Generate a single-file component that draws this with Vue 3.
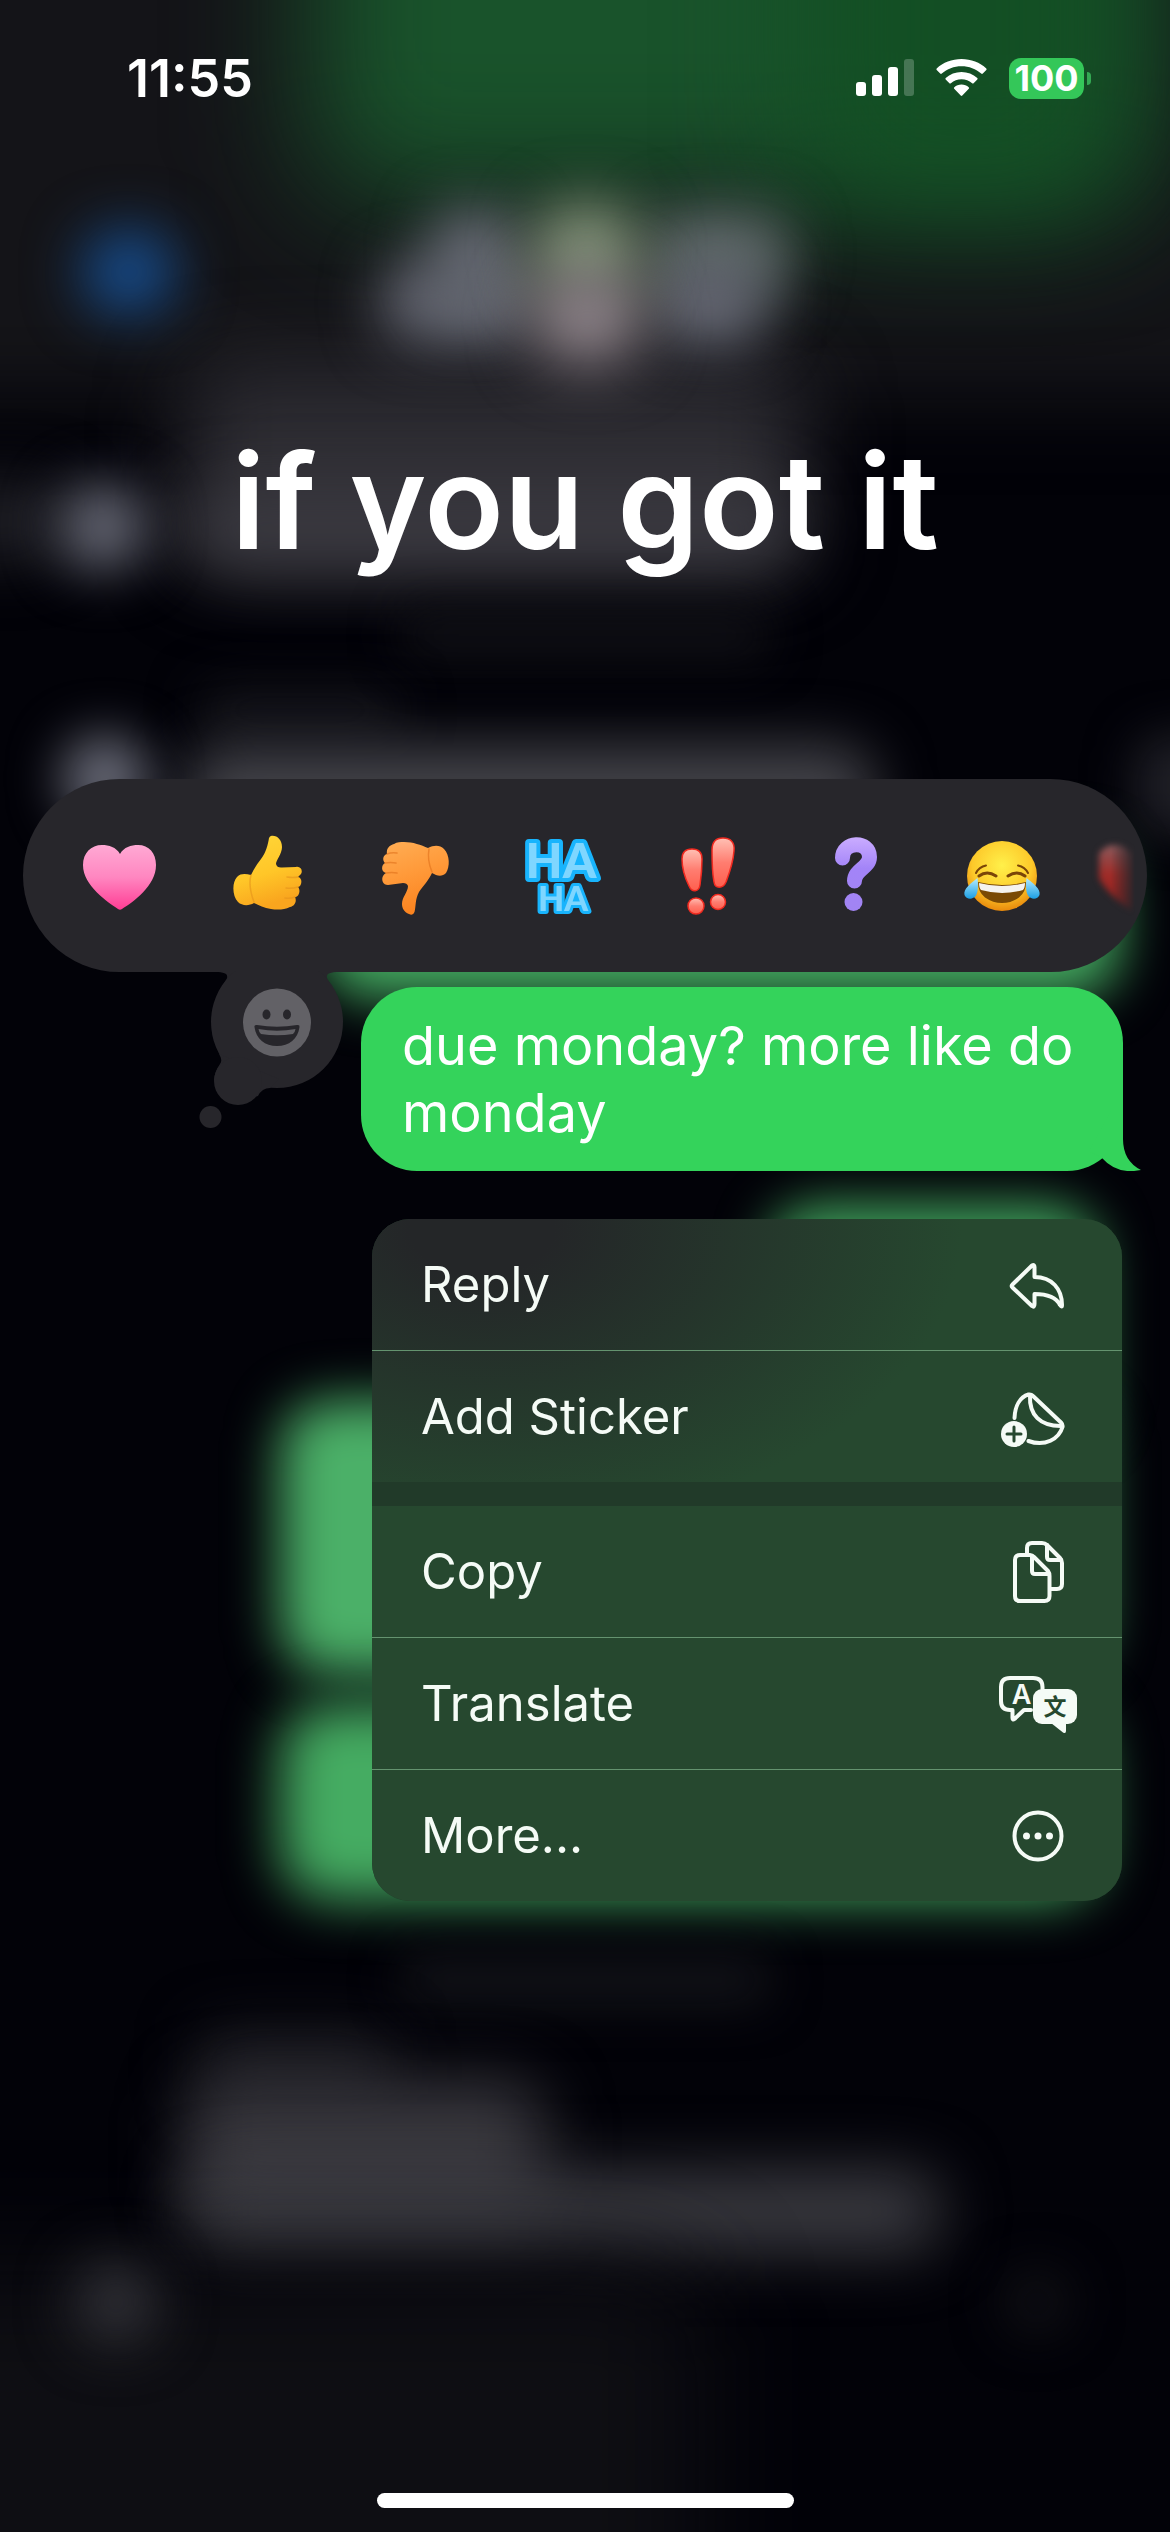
<script setup>
const reactions = ['heart', 'thumbs-up', 'thumbs-down', 'haha', 'exclaim', 'question', 'joy', 'red-heart']

const menuGroups = [
  [
    { label: 'Reply', icon: 'reply' },
    { label: 'Add Sticker', icon: 'sticker' }
  ],
  [
    { label: 'Copy', icon: 'copy' },
    { label: 'Translate', icon: 'translate' },
    { label: 'More...', icon: 'more' }
  ]
]

// Blurred conversation behind the overlay
const blobs = [
  { x: -200, y: -200, w: 1600, h: 600, r: 0, fill: '#141418', blur: 40 },
  { x: 310, y: -350, w: 830, h: 545, r: 60, fill: '#19532b', blur: 64 },
  { x: 800, y: -350, w: 330, h: 560, r: 60, fill: '#134f24', blur: 64 },
  { x: 185, y: 365, w: 620, h: 205, r: 50, fill: '#2e2d33', blur: 42 },
  { x: 185, y: 490, w: 610, h: 76, r: 36, fill: '#3c3b42', blur: 32 },
  { x: -60, y: 480, w: 120, h: 80, r: 20, fill: '#1f1f25', blur: 30 },
  { x: 60, y: 484, w: 86, h: 86, r: 43, fill: '#70727f', blur: 28 },
  { x: 84, y: 232, w: 90, h: 80, r: 40, fill: '#17539a', blur: 30 },
  { x: 380, y: 262, w: 150, h: 80, r: 30, fill: '#62646f', blur: 28 },
  { x: 430, y: 208, w: 90, h: 110, r: 30, fill: '#646871', blur: 28 },
  { x: 650, y: 210, w: 140, h: 90, r: 30, fill: '#5c6866', blur: 28 },
  { x: 655, y: 260, w: 110, h: 85, r: 30, fill: '#646672', blur: 28 },
  { x: 530, y: 200, w: 112, h: 100, r: 40, fill: '#7b8c72', blur: 28 },
  { x: 530, y: 270, w: 114, h: 95, r: 40, fill: '#8d8289', blur: 30 },
  { x: 400, y: 610, w: 370, h: 50, r: 20, fill: '#101015', blur: 24 },
  { x: 200, y: 690, w: 200, h: 40, r: 20, fill: '#16161c', blur: 26 },
  { x: 185, y: 745, w: 690, h: 100, r: 40, fill: '#434349', blur: 28 },
  { x: 62, y: 736, w: 86, h: 86, r: 43, fill: '#70727f', blur: 26 },
  { x: 1135, y: 735, w: 120, h: 100, r: 30, fill: '#1f1f26', blur: 24 },
  { x: 320, y: 840, w: 800, h: 158, r: 50, fill: '#45ad62', blur: 26 },
  { x: 768, y: 1206, w: 330, h: 240, r: 50, fill: '#45ad62', blur: 26 },
  { x: 280, y: 1400, w: 820, h: 274, r: 50, fill: '#4bb068', blur: 26 },
  { x: 280, y: 1704, w: 820, h: 196, r: 50, fill: '#45ac62', blur: 27 },
  { x: 400, y: 1955, w: 370, h: 50, r: 20, fill: '#121318', blur: 24 },
  { x: 200, y: 2030, w: 190, h: 80, r: 20, fill: '#1a1a20', blur: 30 },
  { x: 185, y: 2080, w: 360, h: 150, r: 40, fill: '#37363c', blur: 32 },
  { x: 190, y: 2172, w: 750, h: 78, r: 30, fill: '#3d3d43', blur: 32 },
  { x: -200, y: 2270, w: 900, h: 500, r: 60, fill: '#0e0e13', blur: 54 },
  { x: 78, y: 2264, w: 76, h: 76, r: 38, fill: '#3a3a40', blur: 30 },
  { x: 1005, y: 2270, w: 64, h: 64, r: 32, fill: '#111116', blur: 26 }
]
</script>

<template>
  <div class="screen">
    <svg class="backdrop" viewBox="0 0 1170 2532" preserveAspectRatio="xMidYMin slice" aria-hidden="true">
      <rect
        v-for="(b, i) in blobs"
        :key="i"
        :x="b.x"
        :y="b.y"
        :width="b.w"
        :height="b.h"
        :rx="b.r"
        :fill="b.fill"
        :style="{ filter: `blur(${b.blur}px)` }"
      />
    </svg>

    <header class="status-bar">
      <span class="time">11:55</span>
      <div class="status-icons">
        <svg class="signal" viewBox="0 0 58 38" aria-hidden="true">
          <rect x="0" y="23" width="10" height="14" rx="3" fill="#fff" />
          <rect x="16" y="16" width="10" height="21" rx="3" fill="#fff" />
          <rect x="32" y="8" width="10" height="29" rx="3" fill="#fff" />
          <rect x="48" y="0" width="10" height="37" rx="3" fill="#fff" opacity="0.22" />
        </svg>
        <svg class="wifi" viewBox="0 0 51 38" aria-hidden="true">
          <path fill="#fff" d="M25.500 0C35 0 44 3.500 50.300 9.500Q51 10.300 50.300 11L46.800 14.600Q46 15.300 45.200 14.600C40 9.800 33 7.200 25.500 7.200S11 9.800 5.800 14.600Q5 15.300 4.200 14.600L0.700 11Q0 10.300 0.700 9.500C7 3.500 16 0 25.500 0Z" />
          <path fill="#fff" d="M25.500 13C31.500 13 37 15.200 41.300 19.100Q42 19.800 41.300 20.500L37.600 24.200Q36.900 24.900 36.100 24.200C33.200 21.600 29.500 20.200 25.500 20.200S17.800 21.600 14.900 24.200Q14.100 24.900 13.400 24.200L9.700 20.500Q9 19.800 9.700 19.100C14 15.200 19.500 13 25.500 13Z" />
          <path fill="#fff" d="M25.500 25.500C28.300 25.500 30.800 26.500 32.700 28.200Q33.500 28.900 32.800 29.700L26.300 36.600Q25.500 37.400 24.700 36.600L18.200 29.700Q17.500 28.900 18.300 28.200C20.200 26.500 22.700 25.500 25.500 25.500Z" />
        </svg>
        <div class="battery">
          <span class="battery-level">100</span>
          <span class="battery-cap"></span>
        </div>
      </div>
    </header>

    <h1 class="caption">if you got it</h1>

    <div class="reaction-bar">
      <div class="reaction-track">
        <button v-for="name in reactions" :key="name" class="reaction" type="button" :aria-label="name">
          <svg v-if="name === 'heart'" viewBox="0 0 100 100">
            <defs>
              <linearGradient id="pink" x1="0" y1="0" x2="0" y2="1">
                <stop offset="0" stop-color="#ffa9d4" />
                <stop offset="0.5" stop-color="#ff86c0" />
                <stop offset="1" stop-color="#ff3d94" />
              </linearGradient>
            </defs>
            <path fill="url(#pink)" d="M50 28C46 21 39 19 32 19C21 19 13 27 13 39C13 60 38 76 48 83Q50 84.500 52 83C63 76 86 60 86 39C86 27 79 19 68 19C61 19 54 21 50 28Z" />
          </svg>

          <svg v-else-if="name === 'thumbs-up'" viewBox="0 0 100 100">
            <defs>
              <linearGradient id="yellow" x1="0" y1="0" x2="0.300" y2="1">
                <stop offset="0" stop-color="#ffd83a" />
                <stop offset="0.600" stop-color="#ffc628" />
                <stop offset="1" stop-color="#f9a51e" />
              </linearGradient>
            </defs>
            <path fill="url(#yellow)" d="M54 10C60 9 65 14 65 21C65 28 59 34 59 38Q60 42 65 41.500L79 41C84 40 86 45 84 48Q82 50 81 51C86 52 85 60 81 61C84 64 82 71 78 71C80 75 78 80 73 81C67 84 60 84 54 83C47 82 42 79 37 77C32 80 25 80 21 76C15 70 15 56 20 51C24 47 29 48 34 49C37 43 40 38 44 33C49 27 51 18 52 12Q53 10 54 10Z" />
            <path fill="none" stroke="#e5931a" stroke-width="1.500" stroke-linecap="round" d="M81 51Q76 52 70 51M81 61Q75 63 69 62M78 71Q73 73 68 72M34 49Q31 60 37 76" opacity="0.600" />
          </svg>

          <svg v-else-if="name === 'thumbs-down'" viewBox="0 0 100 100">
            <defs>
              <linearGradient id="orange" x1="0" y1="0" x2="0.300" y2="1">
                <stop offset="0" stop-color="#ffae55" />
                <stop offset="0.500" stop-color="#ff9a3a" />
                <stop offset="1" stop-color="#fb8420" />
              </linearGradient>
            </defs>
            <path fill="url(#orange)" d="M40 16C49 16 57 19 64 22C70 19 76 19 80 23C86 29 86 41 82 47C78 51 73 50 68 47C65 54 59 60 55 66C51 73 52 81 50.500 86Q49 90 45 88C40 86 38 82 38 78C38 71 44 66 44 60Q43 57 39 57L24 59C19 59 17 54 19 50Q20 48 22 47C17 46 17 39 21 37C18 34 19 29 23 28C22 22 26 19 30 18C33 16 37 16 40 16Z" />
            <path fill="none" stroke="#e0701a" stroke-width="1.500" stroke-linecap="round" d="M23 28Q28 26 33 27M21 37Q27 36 32 37M22 47Q28 46 33 47M65 23Q63 34 68 46" opacity="0.600" />
          </svg>

          <svg v-else-if="name === 'haha'" viewBox="0 0 100 100">
            <text class="haha" text-anchor="middle">
              <tspan class="haha-big" x="50" y="52">HA</tspan>
              <tspan class="haha-small" x="52" y="85">HA</tspan>
            </text>
          </svg>

          <svg v-else-if="name === 'exclaim'" viewBox="0 0 100 100">
            <defs>
              <linearGradient id="coral" x1="0" y1="0" x2="0" y2="1">
                <stop offset="0" stop-color="#ffc0b4" />
                <stop offset="0.500" stop-color="#ff7d70" />
                <stop offset="1" stop-color="#ff5f4e" />
              </linearGradient>
            </defs>
            <g fill="url(#coral)" stroke="#f02a20" stroke-width="1.500">
              <path d="M24 33C24 26 28 23 34 23C40 23 44 26 44 33C44 44 43 52 42 59C41 66 34 67 31 60C27 52 24 43 24 33Z" />
              <path d="M54 24C54 16 58 12 65 12C73 12 77 17 76 25C75 38 71 48 68 56C65 63 57 63 56 56C54 46 54 35 54 24Z" />
              <circle cx="38" cy="80" r="8" />
              <circle cx="60" cy="76" r="7.500" />
            </g>
          </svg>

          <svg v-else-if="name === 'question'" viewBox="0 0 100 100">
            <defs>
              <linearGradient id="violet" gradientUnits="userSpaceOnUse" x1="50" y1="12" x2="50" y2="88">
                <stop offset="0" stop-color="#c9abff" />
                <stop offset="0.400" stop-color="#a384f8" />
                <stop offset="1" stop-color="#a184f2" />
              </linearGradient>
            </defs>
            <path fill="none" stroke="url(#violet)" stroke-width="15" stroke-linecap="round" d="M37.500 32C37.500 15 64.500 14 64.500 31C64.500 42 49.500 43 49.500 55" />
            <circle cx="48.500" cy="76" r="9" fill="url(#violet)" />
          </svg>

          <svg v-else-if="name === 'joy'" viewBox="0 0 100 100">
            <defs>
              <radialGradient id="face" cx="0.500" cy="0.350" r="0.650">
                <stop offset="0" stop-color="#fff04a" />
                <stop offset="0.650" stop-color="#fdc92a" />
                <stop offset="1" stop-color="#e8890c" />
              </radialGradient>
              <linearGradient id="tear" x1="0" y1="0" x2="0" y2="1">
                <stop offset="0" stop-color="#b5ecff" />
                <stop offset="1" stop-color="#1c9fe4" />
              </linearGradient>
            </defs>
            <circle cx="50" cy="50" r="35" fill="url(#face)" />
            <g fill="none" stroke="#7a4508" stroke-linecap="round">
              <path stroke-width="2" d="M24 47Q27 41 34 39.500M76 47Q73 41 66 39.500" />
              <path stroke-width="3" d="M27 50Q35 44 44 50M56 50Q65 44 73 50" />
            </g>
            <path fill="#7a4a05" d="M26 56Q50 62 74 56Q74 66 67 71.500Q59 77 50 77T33 71.500Q26 66 26 56Z" />
            <path fill="#f5f3ef" d="M27 57Q50 63 73 57Q73 62 71 64Q60 67 50 67T29 64Q27 62 27 57Z" />
            <path fill="url(#tear)" d="M25.500 52C26.500 60 26 66 24 69.500C21 74 14 73.500 12.500 69C11 63 19 57 25.500 52Z" />
            <path fill="url(#tear)" d="M74.500 52C73.500 60 74 66 76 69.500C79 74 86 73.500 87.500 69C89 63 81 57 74.500 52Z" />
          </svg>

          <svg v-else class="soft" viewBox="17 0 100 100">
            <defs>
              <linearGradient id="red" x1="0" y1="0" x2="0" y2="1">
                <stop offset="0" stop-color="#8a5a5c" />
                <stop offset="0.450" stop-color="#a02c28" />
                <stop offset="1" stop-color="#8c1f1c" />
              </linearGradient>
            </defs>
            <path fill="url(#red)" d="M51 28C46 21 39 19 33 19C22 19 14 27 14 39C14 60 38 76 49 83Q51 84.500 53 83C64 76 87 60 87 39C87 27 80 19 69 19C62 19 55 21 51 28Z" />
          </svg>
        </button>
      </div>

      <button class="emoji-picker" type="button" aria-label="Choose emoji">
        <svg viewBox="0 0 155 160">
          <g fill="#27262b">
            <path d="M20 0V1C30 1 33 3 32 7Q31 10 27 15H137Q133 10 132 7C131 3 134 1 144 1V0Z" />
            <circle cx="82" cy="51" r="66" />
            <path d="M24 83Q28 89 25 93Q20 100 19 109L43 130L63 125Q67 117 75 117L84 108Z" />
            <circle cx="43" cy="110" r="24" />
            <circle cx="15.500" cy="146" r="11" />
          </g>
          <circle cx="82" cy="51.500" r="34" fill="#626166" />
          <g fill="#27262b">
            <ellipse cx="71.500" cy="43.500" rx="4" ry="5" />
            <ellipse cx="92" cy="43.500" rx="4" ry="5" />
            <path d="M59.500 56Q59 53.500 62 54Q82 57.500 102 54Q105 53.500 104.500 56C103 68 94 75 82 75S61 68 59.500 56Z" />
          </g>
          <path fill="#626166" d="M63.500 58Q82 61.500 100.500 58Q100 61.500 98 63Q82 65.500 66 63Q64 61.500 63.500 58Z" />
        </svg>
      </button>
    </div>

    <div class="message">
      due monday? more like do monday
      <svg class="message-tail" viewBox="0 0 80 60" aria-hidden="true">
        <path fill="#34d35b" d="M50 0H62V28Q62 50 80 59Q56 64 41 47L28 40Z" />
      </svg>
    </div>

    <nav class="menu">
      <div v-for="(group, g) in menuGroups" :key="g" class="menu-group">
        <button v-for="item in group" :key="item.label" class="menu-item" type="button">
          <span>{{ item.label }}</span>
          <svg class="menu-icon" viewBox="0 0 80 64" aria-hidden="true">
            <g v-if="item.icon === 'reply'">
              <path d="M14.500 31.500L34 12.500Q36.500 11 36.500 14V24C54 24 64 36 64 52Q64 55 62 52C58 44 50 41 36.500 41V51Q36.500 55 34 53L14.500 34.500Q13 33 14.500 31.500Z" />
            </g>
            <g v-else-if="item.icon === 'sticker'">
              <path d="M16.500 33C17 21 22 12 30.500 9.500Q33 9 35 11L63 37.500Q65 39.500 64.500 42C61 54 47 62 30.500 56" />
              <path d="M32 10C31 30 42 41.500 64 41" />
              <circle class="solid" cx="16" cy="49" r="13" />
              <path class="cutout" d="M16 42V56M9 49H23" />
            </g>
            <g v-else-if="item.icon === 'copy'">
              <path d="M22 15H32Q34 15 36 17L50 31Q51.500 33 51.500 36V56Q51.500 61 46.500 61H22Q17 61 17 56V20Q17 15 22 15Z" />
              <path d="M34 16V31Q34 34 37 34H51" />
              <path d="M29 14V8Q29 3 34 3H44Q47 3 49 5L62 18Q64 20 64 23V44Q64 49 59 49H53" />
              <path d="M49 5V17Q49 20 52 20H63" />
            </g>
            <g v-else-if="item.icon === 'translate'">
              <path d="M33 38H26L16.500 47Q14.500 48.500 14.500 46V38H12Q3 38 3 29V15Q3 6 12 6H35Q44.500 6 44.500 15V17" />
              <rect class="solid" x="35" y="17" width="44" height="35" rx="9" />
              <path class="solid" d="M53 51L65 60.500Q68 62 68 59V51Z" />
              <text class="glyph-latin" x="23.500" y="32" text-anchor="middle">A</text>
              <text class="glyph-han" x="57" y="43" text-anchor="middle">文</text>
            </g>
            <g v-else>
              <circle cx="40" cy="32" r="23.500" />
              <circle class="solid" cx="28.500" cy="32" r="3.500" />
              <circle class="solid" cx="40" cy="32" r="3.500" />
              <circle class="solid" cx="51.500" cy="32" r="3.500" />
            </g>
          </svg>
        </button>
      </div>
    </nav>

    <div class="home-indicator"></div>
  </div>
</template>

<style>
body {
  margin: 0;
  background: #020208;
}
</style>

<style scoped>
.screen {
  position: relative;
  display: flex;
  flex-direction: column;
  min-height: 100vh;
  overflow: hidden;
  background: #020208;
  color: #fff;
  font-family: Inter, "Liberation Sans", sans-serif;
}

.backdrop {
  position: absolute;
  inset: 0;
  width: 100%;
  height: 100%;
}

.status-bar,
.caption,
.reaction-bar,
.message,
.menu,
.home-indicator {
  position: relative;
}

.status-bar {
  display: flex;
  justify-content: space-between;
  align-items: center;
  height: 156px;
  padding: 0 79px 0 127px;
}

.time {
  font-size: 52px;
  font-weight: 600;
}

.status-icons {
  display: flex;
  align-items: center;
  gap: 22px;
}

.signal {
  width: 58px;
  height: 38px;
}

.wifi {
  width: 51px;
  height: 38px;
}

.battery {
  display: flex;
  align-items: center;
  gap: 3px;
}

.battery-level {
  width: 75px;
  height: 41px;
  border-radius: 12px;
  background: #34c759;
  font-size: 36px;
  font-weight: 700;
  line-height: 41px;
  text-align: center;
}

.battery-cap {
  width: 4px;
  height: 13px;
  border-radius: 0 4px 4px 0;
  background: #34a853;
}

.caption {
  margin: 252px 0 0;
  font-size: 131px;
  font-weight: 600;
  line-height: 188px;
  text-align: center;
}

.reaction-bar {
  height: 193px;
  margin: 183px 23px 0;
  border-radius: 97px;
  background: #27262b;
}

.reaction-track {
  display: flex;
  align-items: center;
  height: 100%;
  margin-right: 12px;
  padding-left: 23px;
  overflow: hidden;
  mask-image: linear-gradient(to right, #000 calc(100% - 24px), transparent);
}

.reaction {
  display: flex;
  flex: 0 0 147px;
  justify-content: center;
  padding: 0;
  border: 0;
  background: none;
  cursor: pointer;
}

.reaction svg {
  width: 100px;
  height: 100px;
}

.reaction .soft {
  filter: blur(3px);
}

.haha {
  fill: #7fd6ff;
  stroke: #18b4fd;
  stroke-linejoin: round;
  paint-order: stroke;
  font-family: Lato, Inter, sans-serif;
  font-weight: 900;
}

.haha-big {
  font-size: 48px;
  stroke-width: 8px;
}

.haha-small {
  font-size: 34px;
  stroke-width: 6px;
}

.emoji-picker {
  position: absolute;
  top: 192px;
  left: 172px;
  padding: 0;
  border: 0;
  background: none;
  cursor: pointer;
}

.emoji-picker svg {
  display: block;
  width: 155px;
  height: 160px;
}

.message {
  margin: 15px 47px 0 361px;
  padding: 25px 41px;
  border-radius: 56px;
  background: #34d35b;
  font-size: 54px;
  line-height: 67px;
}

.message-tail {
  position: absolute;
  right: -18px;
  bottom: 0;
  width: 80px;
  height: 60px;
}

.menu {
  display: flex;
  flex-direction: column;
  gap: 24px;
  margin: 48px 48px 0 372px;
  border-radius: 38px;
  overflow: hidden;
  background: #213a29;
}

.menu-group {
  display: flex;
  flex-direction: column;
  background: #26482f;
}

.menu-group:first-child {
  background: radial-gradient(ellipse 480px 300px at 110px 10px, #242628 15%, #26482f 100%);
}

.menu-item {
  display: flex;
  justify-content: space-between;
  align-items: center;
  height: 131px;
  padding: 0 44px 0 49px;
  border: 0;
  background: none;
  color: #f5fbf6;
  font-family: inherit;
  font-size: 49px;
  text-align: left;
  cursor: pointer;
}

.menu-item + .menu-item {
  height: 132px;
  border-top: 1px solid #64936f;
}

.menu-icon {
  width: 80px;
  height: 64px;
  fill: none;
  stroke: #f5fbf6;
  stroke-width: 4px;
  stroke-linecap: round;
  stroke-linejoin: round;
}

.menu-icon .solid {
  fill: #f5fbf6;
  stroke: none;
}

.menu-icon .cutout {
  stroke: #26482f;
  stroke-width: 3px;
}

.glyph-latin {
  fill: #f5fbf6;
  stroke: none;
  font-size: 27px;
  font-weight: 600;
}

.glyph-han {
  fill: #26482f;
  stroke: none;
  font-family: "Noto Sans CJK SC", sans-serif;
  font-size: 23px;
  font-weight: 700;
}

.home-indicator {
  width: 417px;
  height: 15px;
  margin: auto auto 24px;
  border-radius: 8px;
  background: #fff;
}
</style>
